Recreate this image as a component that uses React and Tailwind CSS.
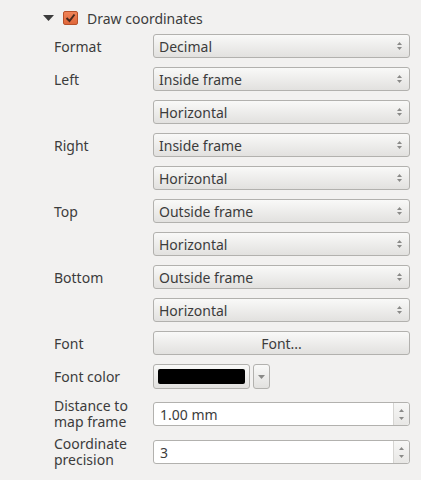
import React from 'react';

const font = { fontFamily: '"Noto Sans", "Open Sans", sans-serif' };

const Arrows = () => (
  <svg width="7" height="12" viewBox="0 0 7 12" className="shrink-0">
    <path d="M3.5 2 L6 5 L1 5 Z" fill="#8a8a88" />
    <path d="M3.5 10 L6 7 L1 7 Z" fill="#8a8a88" />
  </svg>
);

const Combo = ({ value }) => (
  <div className="h-[24px] w-full flex items-center justify-between pl-[5px] pr-[6px] rounded-[3px] border border-[#b2b1ae] bg-gradient-to-b from-[#f9f9f8] to-[#e2e1df] text-[14px] text-[#3c3c3c]">
    <span>{value}</span>
    <Arrows />
  </div>
);

const Spin = ({ value }) => (
  <div className="h-[24px] w-full flex rounded-[3px] border border-[#b2b1ae] bg-white text-[14px] text-[#3c3c3c]">
    <div className="flex-1 flex items-center pl-[6px]">{value}</div>
    <div className="w-[16px] flex flex-col items-center justify-center gap-[5px] border-l border-[#d6d5d2] bg-gradient-to-b from-[#f7f7f6] to-[#e8e7e5] rounded-r-[3px]">
      <svg width="5" height="3" viewBox="0 0 5 3"><path d="M2.5 0 L5 3 L0 3 Z" fill="#8a8a88" /></svg>
      <svg width="5" height="3" viewBox="0 0 5 3"><path d="M2.5 3 L5 0 L0 0 Z" fill="#8a8a88" /></svg>
    </div>
  </div>
);

const Label = ({ children }) => (
  <div className="flex items-center text-[14px] text-[#3c3c3c]">{children}</div>
);

const TwoLine = ({ a, b }) => (
  <div className="h-[32px] flex flex-col justify-center text-[14px] text-[#3c3c3c] leading-[16px]">
    <span className="block h-[16px]">{a}</span>
    <span className="block h-[16px]">{b}</span>
  </div>
);

export default function App() {
  const pairs = [
    ['Left', 'Inside frame'],
    ['Right', 'Inside frame'],
    ['Top', 'Outside frame'],
    ['Bottom', 'Outside frame'],
  ];
  return (
    <div className="w-[421px] h-[480px] bg-[#f2f1f0] overflow-hidden" style={font}>
      <div className="flex items-center h-[14px] mt-[11px] pl-[43px]">
        <svg width="11" height="6" viewBox="0 0 11 6" className="mr-[9px]">
          <path d="M0 0 L11 0 L5.5 6 Z" fill="#3c3c3c" />
        </svg>
        <div className="w-[15px] h-[14px] rounded-[2px] border border-[#b8512a] bg-gradient-to-b from-[#f08458] to-[#e0673a] flex items-center justify-center mr-[9px]">
          <svg width="11" height="10" viewBox="0 0 11 10">
            <path d="M1.5 5 L4.5 8 L9.5 1.5" stroke="#4a2a1e" strokeWidth="2" fill="none" />
          </svg>
        </div>
        <span className="text-[14px] text-[#3c3c3c]">Draw coordinates</span>
      </div>

      <div className="grid grid-cols-[99px_257px] gap-y-[9px] pl-[54px] mt-[9px]">
        <Label>Format</Label>
        <Combo value="Decimal" />
        {pairs.map(([l, v]) => (
          <React.Fragment key={l}>
            <Label>{l}</Label>
            <Combo value={v} />
            <div />
            <Combo value="Horizontal" />
          </React.Fragment>
        ))}
        <Label>Font</Label>
        <div className="h-[24px] w-full flex items-center justify-center rounded-[3px] border border-[#b2b1ae] bg-gradient-to-b from-[#f9f9f8] to-[#e2e1df] text-[14px] text-[#3c3c3c]">
          Font...
        </div>
        <Label>Font color</Label>
        <div className="h-[25px] flex gap-[3px]">
          <div className="w-[97px] h-[25px] rounded-[3px] border border-[#b2b1ae] bg-gradient-to-b from-[#f9f9f8] to-[#e2e1df] p-[4px]">
            <div className="w-full h-full bg-black rounded-[2px]" />
          </div>
          <div className="w-[17px] h-[25px] rounded-[3px] border border-[#b2b1ae] bg-gradient-to-b from-[#f9f9f8] to-[#e2e1df] flex items-center justify-center">
            <svg width="7" height="4" viewBox="0 0 7 4"><path d="M0 0 L7 0 L3.5 4 Z" fill="#8a8a88" /></svg>
          </div>
        </div>
        <TwoLine a="Distance to" b="map frame" />
        <div className="h-[32px] flex items-center"><Spin value="1.00 mm" /></div>
        <div className="-mt-[3px]"><TwoLine a="Coordinate" b="precision" /></div>
        <div className="-mt-[3px] h-[32px] flex items-center"><Spin value="3" /></div>
      </div>
    </div>
  );
}
